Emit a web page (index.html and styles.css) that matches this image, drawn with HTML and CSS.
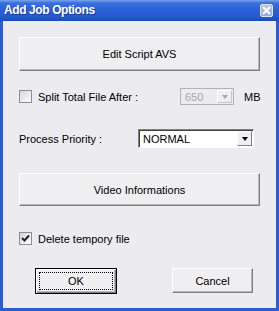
FILE: index.html
```html
<!DOCTYPE html>
<html>
<head>
    <title>Add Job Options</title>
    <meta name="viewport" content="width=device-width, initial-scale=1.0">
    <link rel="stylesheet" href="styles.css">
</head>
<body>
    <div class="window">
        <!-- Title Bar -->
        <div class="titlebar">
            <span class="title">Add Job Options</span>
            <span class="close">
                <svg width="9" height="9" viewBox="0 0 9 9">
                    <path d="M1 1 L8 8 M8 1 L1 8" stroke="#fff" stroke-width="2" fill="none"/>
                </svg>
            </span>
        </div>

        <!-- Dialog Content -->
        <div class="client">
            <button class="btn btn-wide btn-edit">Edit Script AVS</button>

            <div class="row row-split">
                <label class="check check-split"><span class="box"></span>Split Total File After :</label>
                <div class="combo combo-size disabled">
                    <span class="value">650</span>
                    <span class="drop"><span class="arrow"></span></span>
                </div>
                <span class="unit">MB</span>
            </div>

            <div class="row row-priority">
                <span class="label">Process Priority :</span>
                <div class="combo combo-priority">
                    <span class="value">NORMAL</span>
                    <span class="drop"><span class="arrow"></span></span>
                </div>
            </div>

            <button class="btn btn-wide btn-video">Video Informations</button>

            <label class="check row-delete">
                <span class="box checked">
                    <svg width="9" height="9" viewBox="0 0 9 9">
                        <path d="M1 4 L3.5 6.5 L8 1.5" stroke="#222" stroke-width="2" fill="none"/>
                    </svg>
                </span>Delete tempory file
            </label>

            <div class="actions">
                <button class="btn btn-ok"><span class="focus">OK</span></button>
                <button class="btn btn-cancel">Cancel</button>
            </div>
        </div>
    </div>
</body>
</html>
```

FILE: styles.css
```css
* {
    box-sizing: border-box;
    margin: 0;
    padding: 0;
}

body {
    font-family: "Liberation Sans", Arial, sans-serif;
    font-size: 11px;
    color: #000;
    background: #fff;
}

/* Window frame */
.window {
    width: 279px;
    height: 311px;
    background: #2a5cd2;
    padding: 0 3px 3px 3px;
    display: flex;
    flex-direction: column;
}

.titlebar {
    height: 21px;
    margin: 0 -3px;
    padding: 0 6px 0 4px;
    display: flex;
    align-items: center;
    justify-content: space-between;
    background: linear-gradient(#7aa5ec 0, #3a6fde 3px, #2c61d8 45%, #2457cc 85%, #1b48b4 100%);
}

.title {
    color: #fff;
    font-weight: bold;
    font-size: 12px;
    letter-spacing: -0.4px;
    text-shadow: 1px 1px 0 #1a3f9a;
    margin-top: -1px;
}

.close {
    width: 13px;
    height: 13px;
    border-radius: 2px;
    border: 1px solid #dfe6f4;
    background: linear-gradient(#b7c4e2, #97aad4);
    display: flex;
    align-items: center;
    justify-content: center;
}

/* Dialog body */
.client {
    flex: 1;
    background: #ecebef;
    padding: 16px 0 0 16px;
    display: flex;
    flex-direction: column;
}

.btn {
    font-family: inherit;
    font-size: 11px;
    color: #000;
    background: #efeef1;
    border: 1px solid;
    border-color: #fff #808080 #808080 #fff;
    box-shadow: inset -1px -1px 0 #b8b8bc;
    display: flex;
    align-items: center;
    justify-content: center;
}

.btn-wide {
    width: 241px;
    height: 34px;
}

.row {
    display: flex;
    align-items: center;
}

.row-split {
    margin-top: 17px;
    height: 17px;
}

.check {
    display: flex;
    align-items: center;
    gap: 6px;
}

.check-split {
    width: 161px;
}

.box {
    width: 13px;
    height: 13px;
    border: 1px solid #8e8e92;
    background: linear-gradient(135deg, #d6d5d9, #ffffff);
    display: flex;
    align-items: center;
    justify-content: center;
}

.combo {
    display: flex;
    align-items: stretch;
    background: #fff;
    border: 1px solid;
    border-color: #808080 #fff #fff #808080;
    box-shadow: inset 1px 1px 0 #404040;
    padding: 1px 1px 1px 1px;
}

.combo .value {
    flex: 1;
    display: flex;
    align-items: center;
    padding-left: 3px;
}

.drop {
    width: 15px;
    background: #efeef1;
    border: 1px solid;
    border-color: #fff #808080 #808080 #fff;
    display: flex;
    align-items: center;
    justify-content: center;
}

.arrow {
    width: 0;
    height: 0;
    border-left: 3.5px solid transparent;
    border-right: 3.5px solid transparent;
    border-top: 4px solid #000;
}

.combo-size {
    width: 54px;
    height: 17px;
}

.combo.disabled {
    background: #ecebef;
    border-color: #b3b2b6;
    box-shadow: none;
}

.combo.disabled .value {
    color: #a8a7ab;
}

.combo.disabled .drop {
    border-color: #fff #c6c5c9 #c6c5c9 #fff;
}

.combo.disabled .arrow {
    border-top-color: #a8a7ab;
}

.unit {
    margin-left: 10px;
}

.row-priority {
    margin-top: 24px;
}

.label {
    width: 119px;
}

.combo-priority {
    width: 116px;
    height: 19px;
}

.btn-video {
    margin-top: 25px;
    height: 33px;
}

.row-delete {
    margin-top: 26px;
    height: 13px;
}

.actions {
    margin-top: 23px;
    display: flex;
    align-items: flex-start;
    padding-left: 16px;
}

.btn-ok {
    width: 82px;
    height: 26px;
    border: 1px solid #000;
    box-shadow: inset 1px 1px 0 #fff, inset -1px -1px 0 #808080, inset -2px -2px 0 #b8b8bc;
    padding: 3px;
}

.focus {
    width: 100%;
    height: 100%;
    border: 1px dotted #000;
    display: flex;
    align-items: center;
    justify-content: center;
}

.btn-cancel {
    width: 81px;
    height: 25px;
    margin-left: 55px;
}
```
